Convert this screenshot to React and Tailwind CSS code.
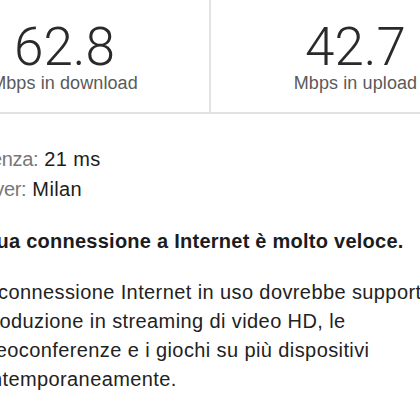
export default function App() {
  const stats = [
    { value: '62.8', label: 'Mbps in download' },
    { value: '42.7', label: 'Mbps in upload' },
  ];

  return (
    <div className="w-[420px] h-[420px] overflow-hidden bg-white text-[#1c1c1e] font-['Liberation_Sans',Arial,sans-serif]">
      {/* Speed card */}
      <div className="-ml-[80px] w-[580px] h-[114px] flex border-b-2 border-[#e2e2e2]">
        {stats.map((s, i) => (
          <div
            key={s.label}
            className={`flex-1 flex flex-col items-center justify-end pb-[20px] ${
              i === 0 ? 'border-r-2 border-[#e2e2e2]' : ''
            }`}
          >
            <div className="text-[53px] leading-none font-light text-[#2a2a2a] font-['Roboto',sans-serif]">
              {s.value}
            </div>
            <div className="text-[18px] leading-none tracking-[0.1px] text-[#5a5a5a]">{s.label}</div>
          </div>
        ))}
      </div>

      {/* Details */}
      <div className="pt-[30px] tracking-[0.4px]">
        <div className="-ml-[36px] text-[20px] leading-[30px]">
          <span className="text-[#777] tracking-[-0.3px]">Latenza:</span> 21 ms
        </div>
        <div className="-ml-[36px] text-[20px] leading-[30px]">
          <span className="text-[#777] tracking-[-0.3px]">Server:</span> Milan
        </div>

        <p className="-ml-[40px] mt-[22px] text-[20px] leading-[30px] font-bold tracking-[0.25px] whitespace-nowrap">
          La tua connessione a Internet è molto veloce.
        </p>

        <p className="-ml-[31px] mt-[22px] text-[20px] leading-[29px] text-[#222] whitespace-nowrap">
          La connessione Internet in uso dovrebbe supportare la
          <br />
          riproduzione in streaming di video HD, le
          <br />
          videoconferenze e i giochi su più dispositivi
          <br />
          contemporaneamente.
        </p>
      </div>
    </div>
  );
}
